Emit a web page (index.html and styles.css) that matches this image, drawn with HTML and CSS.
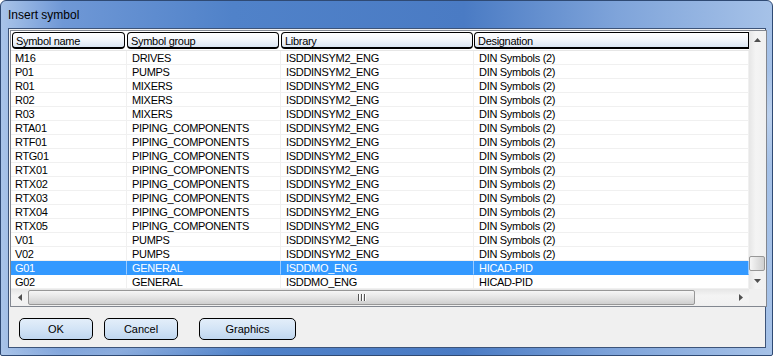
FILE: index.html
```html
<!DOCTYPE html>
<html>

<head>
    <meta charset="UTF-8">
    <title>Insert symbol</title>
    <link rel="stylesheet" href="styles.css">
</head>

<body>
    <div class="window">
        <div class="titlebar">Insert symbol</div>
        <div class="client">
            <div class="listbox">
                <div class="listmain">
                    <div class="grid">
                        <div class="head">
                            <div class="hcell hc1"><span>Symbol name</span></div>
                            <div class="hcell hc2"><span>Symbol group</span></div>
                            <div class="hcell hc3"><span>Library</span></div>
                            <div class="hcell hc4"><span>Designation</span></div>
                        </div>
                        <div class="row"><div>M16</div><div>DRIVES</div><div>ISDDINSYM2_ENG</div><div>DIN Symbols (2)</div></div>
                        <div class="row"><div>P01</div><div>PUMPS</div><div>ISDDINSYM2_ENG</div><div>DIN Symbols (2)</div></div>
                        <div class="row"><div>R01</div><div>MIXERS</div><div>ISDDINSYM2_ENG</div><div>DIN Symbols (2)</div></div>
                        <div class="row"><div>R02</div><div>MIXERS</div><div>ISDDINSYM2_ENG</div><div>DIN Symbols (2)</div></div>
                        <div class="row"><div>R03</div><div>MIXERS</div><div>ISDDINSYM2_ENG</div><div>DIN Symbols (2)</div></div>
                        <div class="row"><div>RTA01</div><div>PIPING_COMPONENTS</div><div>ISDDINSYM2_ENG</div><div>DIN Symbols (2)</div></div>
                        <div class="row"><div>RTF01</div><div>PIPING_COMPONENTS</div><div>ISDDINSYM2_ENG</div><div>DIN Symbols (2)</div></div>
                        <div class="row"><div>RTG01</div><div>PIPING_COMPONENTS</div><div>ISDDINSYM2_ENG</div><div>DIN Symbols (2)</div></div>
                        <div class="row"><div>RTX01</div><div>PIPING_COMPONENTS</div><div>ISDDINSYM2_ENG</div><div>DIN Symbols (2)</div></div>
                        <div class="row"><div>RTX02</div><div>PIPING_COMPONENTS</div><div>ISDDINSYM2_ENG</div><div>DIN Symbols (2)</div></div>
                        <div class="row"><div>RTX03</div><div>PIPING_COMPONENTS</div><div>ISDDINSYM2_ENG</div><div>DIN Symbols (2)</div></div>
                        <div class="row"><div>RTX04</div><div>PIPING_COMPONENTS</div><div>ISDDINSYM2_ENG</div><div>DIN Symbols (2)</div></div>
                        <div class="row"><div>RTX05</div><div>PIPING_COMPONENTS</div><div>ISDDINSYM2_ENG</div><div>DIN Symbols (2)</div></div>
                        <div class="row"><div>V01</div><div>PUMPS</div><div>ISDDINSYM2_ENG</div><div>DIN Symbols (2)</div></div>
                        <div class="row"><div>V02</div><div>PUMPS</div><div>ISDDINSYM2_ENG</div><div>DIN Symbols (2)</div></div>
                        <div class="row selected"><div>G01</div><div>GENERAL</div><div>ISDDMO_ENG</div><div>HICAD-PID</div></div>
                        <div class="row"><div>G02</div><div>GENERAL</div><div>ISDDMO_ENG</div><div>HICAD-PID</div></div>
                    </div>
                    <div class="vscroll">
                        <div class="arrow">
                            <svg width="7" height="4" viewBox="0 0 7 4"><path d="M0 4 L3.5 0 L7 4 Z" fill="#505050"/></svg>
                        </div>
                        <div class="vtrack">
                            <div class="vthumb"></div>
                        </div>
                        <div class="arrow">
                            <svg width="7" height="4" viewBox="0 0 7 4"><path d="M0 0 L3.5 4 L7 0 Z" fill="#505050"/></svg>
                        </div>
                    </div>
                </div>
                <div class="hscroll">
                    <div class="harrow">
                        <svg width="4" height="7" viewBox="0 0 4 7"><path d="M4 0 L0 3.5 L4 7 Z" fill="#505050"/></svg>
                    </div>
                    <div class="hthumb">
                        <span class="grip"></span><span class="grip"></span><span class="grip"></span>
                    </div>
                    <div class="htrack"></div>
                    <div class="harrow">
                        <svg width="4" height="7" viewBox="0 0 4 7"><path d="M0 0 L4 3.5 L0 7 Z" fill="#505050"/></svg>
                    </div>
                    <div class="corner"></div>
                </div>
            </div>
            <div class="buttons">
                <div class="btn btn-ok">OK</div>
                <div class="btn btn-cancel">Cancel</div>
                <div class="btn btn-graphics">Graphics</div>
            </div>
        </div>
    </div>
</body>

</html>
```

FILE: styles.css
```css
* {
    margin: 0;
    padding: 0;
    box-sizing: border-box;
}

body {
    width: 773px;
    height: 356px;
    overflow: hidden;
    background: #ffffff;
    font-family: "Liberation Sans", Arial, sans-serif;
    font-size: 11px;
    color: #000000;
}

.window {
    width: 773px;
    height: 356px;
    display: flex;
    flex-direction: column;
    padding: 0 6px 7px 7px;
    border: 1px solid #2f4a74;
    border-radius: 6px 6px 2px 2px;
    background:
        linear-gradient(160deg, rgba(255, 255, 255, 0) 55%, rgba(255, 255, 255, 0.25) 62%, rgba(255, 255, 255, 0) 70%),
        linear-gradient(to right, #a9c4e9 0%, #6f98d6 8%, #5082c9 30%, #4a7bc4 60%, #7fa4da 80%, #a6c2e8 100%);
}

.titlebar {
    height: 27px;
    padding: 7px 0 0 0;
    font-size: 12px;
    color: #000000;
    flex-shrink: 0;
}

.client {
    flex: 1;
    display: flex;
    flex-direction: column;
    background: #f0f0f0;
    border: 1px solid #3d5479;
    padding: 1px 0 0 1px;
}

/* list */
.listbox {
    width: 757px;
    border: 1px solid #828790;
    background: #ffffff;
    display: flex;
    flex-direction: column;
}

.listmain {
    display: flex;
}

.grid {
    width: 738px;
    letter-spacing: -0.3px;
}

.head {
    display: grid;
    grid-template-columns: 116px 154px 193px 275px;
    height: 20px;
    background: #ffffff;
    border-bottom: 1px solid #e6e6e6;
}

.hcell {
    padding: 1px 2px 1px 0;
}

.hc1 {
    padding-left: 1px;
}

.hc3 {
    padding-right: 1px;
}

.hc4 {
    padding-right: 0;
}

.hcell span {
    display: block;
    height: 17px;
    line-height: 16px;
    padding-left: 3px;
    border: 1px solid #000000;
    border-bottom-width: 2px;
    border-radius: 4px;
    background: linear-gradient(#ffffff 0%, #f4f7fb 45%, #dae5f2 100%);
    white-space: nowrap;
    overflow: hidden;
}

.hc4 span {
    border-radius: 4px 0 0 4px;
}

.row {
    display: grid;
    grid-template-columns: 116px 154px 193px 275px;
    height: 14px;
}

.row div {
    height: 14px;
    line-height: 14px;
    padding-left: 5px;
    border-right: 1px solid #f0f0f0;
    border-bottom: 1px solid #f0f0f0;
    white-space: nowrap;
    overflow: hidden;
}

.row div:first-child {
    padding-left: 4px;
}

.row.selected div {
    background: #3399ff;
    color: #ffffff;
    border-bottom-color: #3399ff;
    border-right-color: #9cccff;
}

/* vertical scrollbar */
.vscroll {
    width: 17px;
    display: flex;
    flex-direction: column;
    background: linear-gradient(to right, #e6e6e6, #f4f4f4 40%, #f0f0f0);
}

.arrow {
    height: 17px;
    display: flex;
    align-items: center;
    justify-content: center;
}

.vtrack {
    flex: 1;
    display: flex;
    flex-direction: column;
    justify-content: flex-end;
    padding-bottom: 1px;
}

.vthumb {
    height: 15px;
    margin: 0 1px 0 0;
    border: 1px solid #979797;
    border-radius: 2px;
    background: linear-gradient(to right, #f6f6f6, #e2e2e2 50%, #cfcfcf);
}

/* horizontal scrollbar */
.hscroll {
    height: 17px;
    display: flex;
    background: linear-gradient(#e6e6e6, #f4f4f4 40%, #f0f0f0);
}

.harrow {
    width: 17px;
    display: flex;
    align-items: center;
    justify-content: center;
}

.hthumb {
    width: 667px;
    margin: 1px 0 1px 0;
    border: 1px solid #979797;
    border-radius: 2px;
    background: linear-gradient(#f6f6f6, #e4e4e4 50%, #cfcfcf);
    display: flex;
    align-items: center;
    justify-content: center;
    gap: 1px;
}

.grip {
    width: 1px;
    height: 7px;
    background: #555555;
    border-right: 1px solid #ffffff;
    box-sizing: content-box;
}

.htrack {
    flex: 1;
}

.corner {
    width: 17px;
    background: #f0f0f0;
}

/* buttons */
.buttons {
    display: flex;
    margin: 11px 0 0 9px;
}

.btn {
    height: 22px;
    line-height: 20px;
    text-align: center;
    border: 1px solid #000000;
    border-radius: 5px;
    background: linear-gradient(#e3eefa 0%, #d3e4f6 50%, #bfd6ef 100%);
    font-size: 11px;
}

.btn-ok {
    width: 74px;
}

.btn-cancel {
    width: 74px;
    margin-left: 11px;
}

.btn-graphics {
    width: 97px;
    margin-left: 21px;
}
```
